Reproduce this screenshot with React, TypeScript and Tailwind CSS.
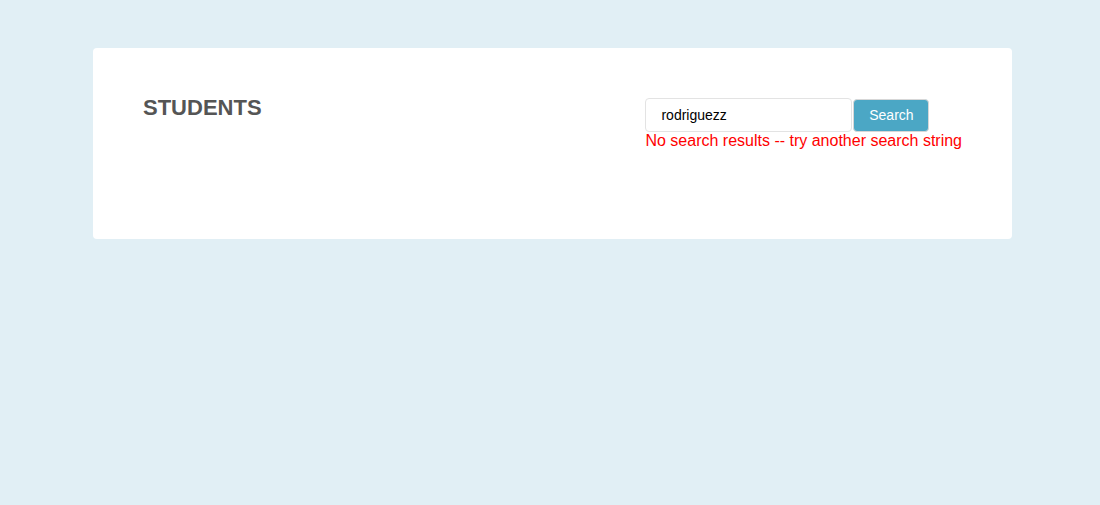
export default function App() {
  return (
    <div className="min-h-[505px] bg-[#e1eff5] pt-[48px] font-['Liberation_Sans',Arial,sans-serif]">
      <div className="ml-[93px] w-[919px] h-[191px] rounded bg-white px-[50px] pt-[50px] flex justify-between">
        <h1 className="text-[22px] font-bold text-[#555555] leading-[22px] mt-[-1px]">STUDENTS</h1>
        <div className="flex flex-col">
          <div className="flex items-center">
            <input
              className="w-[207px] h-[34px] rounded border border-[#e3e3e3] px-[15px] text-[14px] text-black outline-none"
              defaultValue="rodriguezz"
            />
            <button className="ml-[1px] w-[76px] h-[33px] rounded border border-[#d7d7d7] bg-[#4ba7c5] text-[14px] text-white">
              Search
            </button>
          </div>
          <p className="text-[16px] leading-[18px] text-[#ff0000]">No search results -- try another search string</p>
        </div>
      </div>
    </div>
  );
}
